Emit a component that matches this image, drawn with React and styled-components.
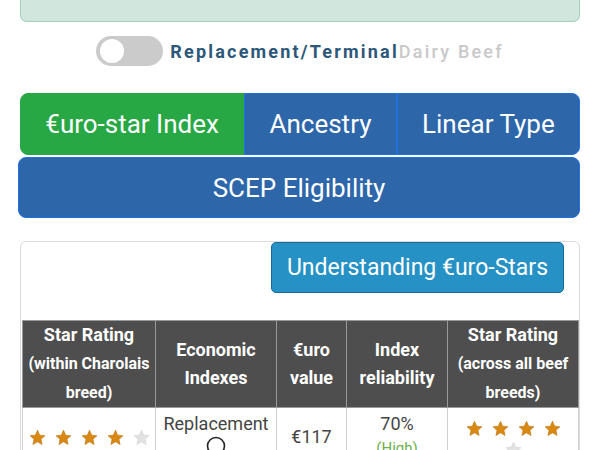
import React from 'react';
import styled, { createGlobalStyle } from 'styled-components';

const GlobalStyle = createGlobalStyle`
	body {
		margin: 0;
		background: #fff;
		font-family: Roboto, "Liberation Sans", sans-serif;
	}
`;

const Page = styled.div`
	padding: 0 20px;
	width: 560px;
`;

const Alert = styled.div`
	height: 21px;
	background: #d1e7dd;
	border: 1px solid #a3cfbb;
	border-top: none;
	border-radius: 0 0 7px 7px;
`;

const ToggleRow = styled.div`
	margin-top: 14px;
	height: 30px;
	display: flex;
	align-items: center;
	justify-content: center;
`;

const Switch = styled.div`
	width: 67px;
	height: 30px;
	border-radius: 15px;
	background: #cbcbcb;
	display: flex;
	align-items: center;
	padding-left: 4px;
	box-sizing: border-box;
	margin-right: 7px;
	&::before {
		content: '';
		width: 24px;
		height: 24px;
		border-radius: 50%;
		background: #fff;
	}
`;

const ToggleLabel = styled.span`
	font-size: 18px;
	letter-spacing: 2.2px;
	font-weight: ${(p) => (p.$active ? 700 : 500)};
	color: ${(p) => (p.$active ? '#2b5779' : '#c9c9c9')};
`;

const Tabs = styled.div`
	margin-top: 27px;
	display: flex;
	flex-direction: column;
	gap: 2px;
`;

const TabRow = styled.div`
	display: flex;
	height: 62px;
`;

const Tab = styled.div`
	flex: 1 1 auto;
	display: flex;
	align-items: center;
	justify-content: center;
	padding: 0 24px;
	font-size: 26px;
	color: #fff;
	box-sizing: border-box;
	background: ${(p) => (p.$active ? '#28a745' : '#2d66a9')};
	border: 1px solid ${(p) => (p.$active ? '#28a745' : '#1f6fe0')};
	&:first-child {
		border-radius: 8px 0 0 8px;
	}
	&:last-child {
		border-radius: 0 8px 8px 0;
	}
`;

const WideTab = styled(Tab)`
	height: 61px;
	margin-left: -2px;
	&:first-child,
	&:last-child {
		border-radius: 8px;
	}
`;

const Card = styled.div`
	margin-top: 22px;
	border: 1px solid #dcdcdc;
	border-radius: 6px;
	padding: 0 1px;
`;

const CardHead = styled.div`
	display: flex;
	justify-content: flex-end;
	padding-right: 14px;
`;

const InfoButton = styled.div`
	height: 51px;
	padding: 0 15px;
	display: flex;
	align-items: center;
	background: #2591c5;
	border: 1px solid #1d6a98;
	border-radius: 5px;
	color: #fff;
	font-size: 23px;
	box-sizing: border-box;
`;

const Table = styled.table`
	margin-top: 27px;
	width: 556px;
	border-collapse: collapse;
	table-layout: fixed;
`;

const Th = styled.th`
	background: #4e4e4e;
	color: #fff;
	border: 1px solid #9a9a9a;
	font-size: 18px;
	font-weight: 700;
	line-height: 28px;
	height: 86px;
	padding: 0 2px;
	text-align: center;
	vertical-align: middle;
`;

const Sub = styled.span`
	font-size: 16px;
`;

const Td = styled.td`
	border: 1px solid #cfcfcf;
	text-align: center;
	vertical-align: ${(p) => p.$valign || 'middle'};
	font-size: 18px;
	color: #444;
	padding: ${(p) => p.$top || 4}px 5px 0;
	line-height: 24px;
`;

const Stars = styled.div`
	display: flex;
	flex-wrap: wrap;
	justify-content: center;
	gap: 4px 9px;
`;

const Green = styled.div`
	color: #6ab04c;
	font-size: 15px;
`;

const StarIcon = ({ on }) => (
	<svg width="17" height="17" viewBox="0 0 24 24">
		<path
			d="M12 1.8l3.1 6.9 7.4.8-5.6 5 1.6 7.4L12 18.1l-6.5 3.8 1.6-7.4-5.6-5 7.4-.8z"
			fill={on ? '#d98812' : '#e2e2e2'}
			stroke={on ? '#b86f0a' : '#d0d0d0'}
			strokeWidth="0.8"
		/>
	</svg>
);

const Rating = ({ value }) => (
	<Stars>
		{[1, 2, 3, 4, 5].map((n) => (
			<StarIcon key={n} on={n <= value} />
		))}
	</Stars>
);

const HelpIcon = () => (
	<svg width="20" height="20" viewBox="0 0 20 20">
		<circle cx="10" cy="10" r="8.5" fill="none" stroke="#222" strokeWidth="1.6" />
	</svg>
);

const App = () => {
	return (
		<Page>
			<GlobalStyle />
			<Alert />
			<ToggleRow>
				<Switch />
				<ToggleLabel $active>Replacement/Terminal</ToggleLabel>
				<ToggleLabel>Dairy Beef</ToggleLabel>
			</ToggleRow>
			<Tabs>
				<TabRow>
					<Tab $active>€uro-star Index</Tab>
					<Tab>Ancestry</Tab>
					<Tab>Linear Type</Tab>
				</TabRow>
				<TabRow>
					<WideTab>SCEP Eligibility</WideTab>
				</TabRow>
			</Tabs>
			<Card>
				<CardHead>
					<InfoButton>Understanding €uro-Stars</InfoButton>
				</CardHead>
				<Table>
					<colgroup>
						<col style={{ width: 133 }} />
						<col style={{ width: 121 }} />
						<col style={{ width: 70 }} />
						<col style={{ width: 101 }} />
						<col style={{ width: 131 }} />
					</colgroup>
					<thead>
						<tr>
							<Th>
								Star Rating
								<br />
								<Sub>(within Charolais breed)</Sub>
							</Th>
							<Th>Economic Indexes</Th>
							<Th>€uro value</Th>
							<Th>Index reliability</Th>
							<Th>
								Star Rating
								<br />
								<Sub>(across all beef breeds)</Sub>
							</Th>
						</tr>
					</thead>
					<tbody>
						<tr>
							<Td>
								<Rating value={4} />
							</Td>
							<Td $valign="top">
								Replacement
								<div>
									<HelpIcon />
								</div>
							</Td>
							<Td>€117</Td>
							<Td $valign="top">
								70%
								<Green>(High)</Green>
							</Td>
							<Td $valign="top" $top={12}>
								<Rating value={4} />
							</Td>
						</tr>
					</tbody>
				</Table>
			</Card>
		</Page>
	);
};

export default App;
